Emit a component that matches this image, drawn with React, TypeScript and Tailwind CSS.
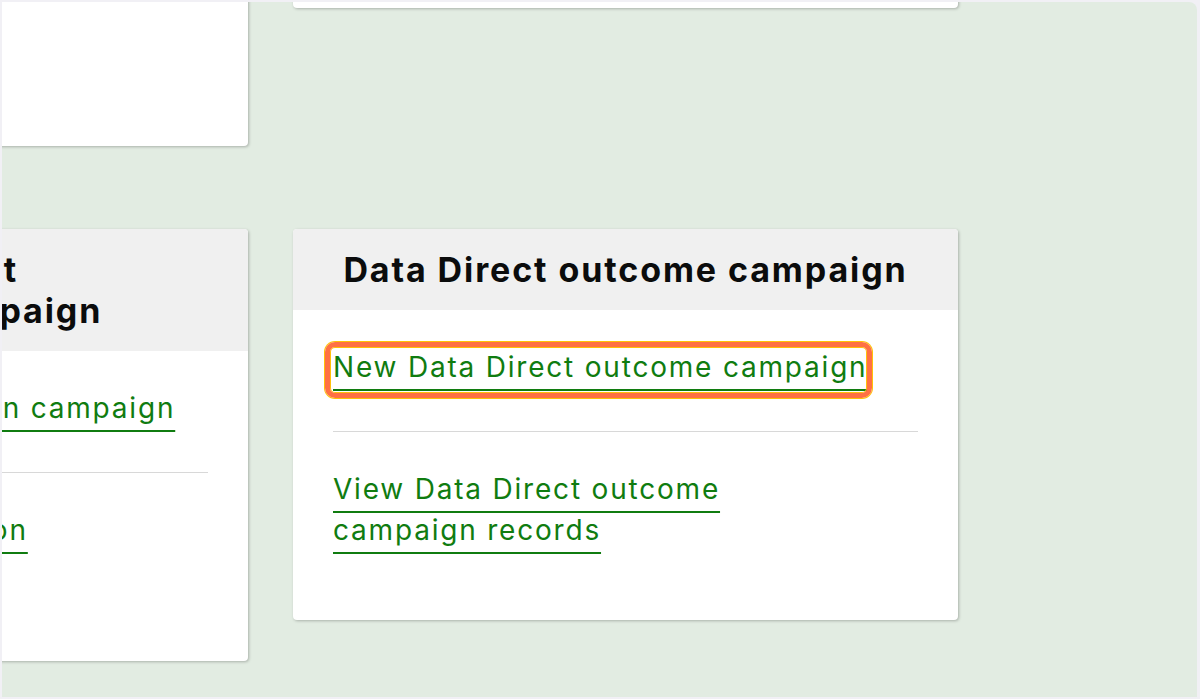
import React from 'react';

const font = { fontFamily: 'Inter, "Noto Sans", sans-serif' };

function FocusRing() {
  return (
    <span className="pointer-events-none absolute -left-[8px] -right-[5px] -top-[8px] -bottom-[14px] rounded-[10px] border-[5px] border-[#ff7043] shadow-[0_0_0_1px_#ffc107,inset_0_0_0_1px_#ffc107]" />
  );
}

function CampaignCard({ title, newLabel, viewLabel, focused }: any) {
  return (
    <div className="overflow-hidden rounded-[4px] bg-white shadow-[1px_1px_3px_rgba(0,0,0,0.25)]">
      <div className="bg-[#f0f0f0] px-10 py-5 text-center">
        <h2 className="text-[34px] font-bold leading-[41px] tracking-[1.9px] text-[#0b0c0c]">{title}</h2>
      </div>
      <div className="px-10 pt-[37px] pb-[69px] text-[28px] leading-[41px] tracking-[1.8px]">
        <div>
          <span className="relative">
            <a href="#" className="text-[#107c10] underline decoration-2 underline-offset-[12px]">
              {newLabel}
            </a>
            {focused && <FocusRing />}
          </span>
        </div>
        <hr className="mt-[43px] border-0 border-t border-[#d8d8d8]" />
        <div className="mt-[37px] max-w-[460px]">
          <a href="#" className="text-[#107c10] underline decoration-2 underline-offset-[12px]">
            {viewLabel}
          </a>
        </div>
      </div>
    </div>
  );
}

export default function App() {
  return (
    <div className="h-[699px] w-[1200px] bg-[#f1f0f5] pt-[2px] pr-[3px] pb-[2px] pl-[2px]" style={font}>
      <div className="h-full overflow-hidden rounded-tr-[8px] bg-[#e2ece2]">
        <div className="-mt-[156px] -ml-[419px] grid grid-cols-[665px_665px] items-start gap-x-[45px] gap-y-[83px]">
          <div className="h-[300px] rounded-[4px] bg-white shadow-[1px_1px_3px_rgba(0,0,0,0.25)]" />
          <div className="h-[162px] rounded-[4px] bg-white shadow-[1px_1px_3px_rgba(0,0,0,0.25)]" />
          <CampaignCard
            title={<>Data Direct<br />activation campaign</>}
            newLabel="New Data Direct activation campaign"
            viewLabel="View Data Direct activation campaign records"
          />
          <CampaignCard
            title="Data Direct outcome campaign"
            newLabel="New Data Direct outcome campaign"
            viewLabel="View Data Direct outcome campaign records"
            focused
          />
        </div>
      </div>
    </div>
  );
}
